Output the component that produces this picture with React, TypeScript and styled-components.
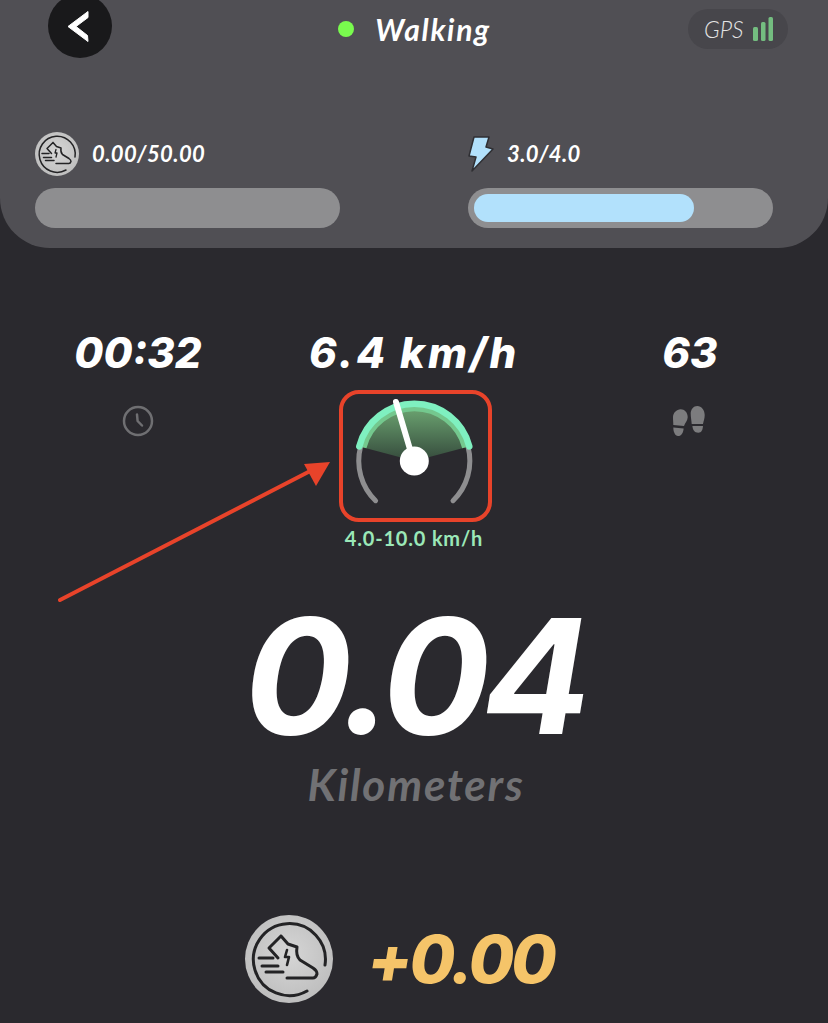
import styled, { createGlobalStyle } from 'styled-components';

const GlobalStyle = createGlobalStyle`
    html, body {
        margin: 0;
        padding: 0;
        background-color: #2a292e;
    }
`;

const Page = styled.div`
    position: relative;
    width: 828px;
    height: 1023px;
    overflow: hidden;
    background-color: #2a292e;
    color: #fff;
    font-family: 'Lato', 'Noto Sans', sans-serif;
`;

const Header = styled.header`
    box-sizing: border-box;
    height: 248px;
    padding: 0 55px 0 35px;
    background-color: #504f54;
    border-radius: 0 0 50px 50px;
`;

const TopBar = styled.div`
    display: grid;
    grid-template-columns: 1fr auto 1fr;
    align-items: center;
    height: 58px;
    margin-right: -20px;
    padding: 0 5px 0 13px;
`;

const BackButton = styled.div`
    display: flex;
    align-items: center;
    justify-content: center;
    width: 64px;
    height: 64px;
    margin-top: -6px;
    padding-right: 5px;
    box-sizing: border-box;
    border-radius: 50%;
    background-color: #19191b;
`;

const Activity = styled.div`
    display: flex;
    align-items: center;
    gap: 21px;
    margin-right: 7px;
    font-size: 30px;
    font-weight: 700;
    font-style: italic;
    letter-spacing: 1.7px;
`;

const Dot = styled.span`
    width: 16px;
    height: 16px;
    border-radius: 50%;
    background-color: #79fb4e;
`;

const GpsPill = styled.div`
    justify-self: end;
    display: flex;
    align-items: center;
    gap: 9px;
    box-sizing: border-box;
    width: 100px;
    height: 40px;
    padding-left: 16px;
    border-radius: 20px;
    background-color: #47464b;
    color: #e4e4e4;
    font-size: 23px;
    font-weight: 300;
    font-style: italic;
`;

const Meters = styled.div`
    display: grid;
    grid-template-columns: 305px 305px;
    justify-content: space-between;
    margin-top: 74px;
`;

const Meter = styled.div`
    display: flex;
    flex-direction: column;
    gap: 12px;
`;

const MeterLabel = styled.div`
    display: flex;
    align-items: center;
    gap: 13px;
    height: 44px;
    font-size: 22px;
    line-height: 42px;
    font-weight: 700;
    font-style: italic;
    letter-spacing: 0.4px;
`;

const Track = styled.div`
    box-sizing: border-box;
    height: 40px;
    padding: 6px;
    border-radius: 20px;
    background-color: #8e8e90;
`;

const Fill = styled.div`
    height: 100%;
    border-radius: 14px;
    background-color: #b2e1fc;
`;

const Stats = styled.section`
    display: grid;
    grid-template-columns: repeat(3, 1fr);
    align-items: start;
    margin-top: 78px;
`;

const Stat = styled.div`
    display: flex;
    flex-direction: column;
    align-items: center;
`;

const StatValue = styled.div<{ $spacing?: number }>`
    height: 54px;
    font-family: 'Inter', 'Lato', sans-serif;
    font-size: 42px;
    line-height: 54px;
    font-weight: 800;
    font-style: italic;
    white-space: nowrap;
    letter-spacing: ${(props) => props.$spacing ?? 0}px;
`;

const StatIcon = styled.div`
    display: flex;
    align-items: center;
    justify-content: center;
    height: 34px;
    margin-top: 24px;
`;

const GaugeFrame = styled.div`
    box-sizing: border-box;
    width: 153px;
    height: 132px;
    margin-top: 10px;
    margin-left: 2px;
    border: 4px solid #e8432a;
    border-radius: 20px;
`;

const RangeText = styled.div`
    margin-top: 4px;
    color: #9be8b8;
    font-size: 20px;
    line-height: 24px;
    font-weight: 700;
    letter-spacing: 0.8px;
`;

const Distance = styled.section`
    display: flex;
    flex-direction: column;
    align-items: center;
    margin-top: 48px;
`;

const DistanceValue = styled.div`
    height: 156px;
    font-family: 'Inter', 'Lato', sans-serif;
    font-size: 160px;
    line-height: 156px;
    font-weight: 700;
    font-style: italic;
    letter-spacing: -7px;
`;

const DistanceUnit = styled.div`
    margin-top: 3px;
    padding-left: 4px;
    color: #717174;
    font-size: 44px;
    line-height: 54px;
    font-weight: 700;
    font-style: italic;
    letter-spacing: 1.8px;
`;

const Reward = styled.section`
    display: flex;
    align-items: center;
    justify-content: center;
    gap: 34px;
    margin-top: 104px;
    padding-right: 29px;
`;

const RewardValue = styled.div`
    color: #f5c469;
    font-family: 'Inter', 'Lato', sans-serif;
    font-size: 66px;
    line-height: 88px;
    font-weight: 800;
    font-style: italic;
    letter-spacing: -3px;
`;

const Arrow = styled.svg`
    position: absolute;
    left: 50px;
    top: 450px;
`;

const Coin = ({ size }: { size: number }) => (
    <svg width={size} height={size} viewBox="0 0 88 88">
        <defs>
            <radialGradient id={`coin${size}`} cx="50%" cy="45%" r="60%">
                <stop offset="0%" stopColor="#d6d6d6" />
                <stop offset="100%" stopColor="#bcbcbc" />
            </radialGradient>
        </defs>
        <circle cx="44" cy="44" r="44" fill={`url(#coin${size})`} />
        <g fill="none" stroke="#232325" strokeWidth="3" strokeLinecap="round" strokeLinejoin="round">
            <path d="M62 76A36 36 0 1 1 80 50" />
            <path d="M36 21L24 33L33 43M36 21L43 29L52 32C51 38 52 42 55 45L68 53C71 55 72 57 72 59C71 62 70 63 68 63H42" />
            <path d="M14 43H28M17 51H33M21 57H38" />
            <path d="M42 35L40 42H44L42 50" strokeWidth="2.6" />
        </g>
    </svg>
);

const App = () => {
    return (
        <Page>
            <GlobalStyle />
            <Header>
                <TopBar>
                    <BackButton>
                        <svg width="22" height="31" viewBox="0 0 22 31">
                            <path d="M21 0.5L1 15.5L21 30.5L20.5 24.5L9 15.5L21 6.5Z" fill="#fff" stroke="#fff" strokeWidth="1" strokeLinejoin="round" />
                        </svg>
                    </BackButton>
                    <Activity>
                        <Dot />
                        Walking
                    </Activity>
                    <GpsPill>
                        GPS
                        <svg width="20" height="24" viewBox="0 0 20 24">
                            <rect x="0" y="10" width="5" height="14" rx="1.5" fill="#74bd80" />
                            <rect x="8" y="5" width="4.5" height="19" rx="1.5" fill="#74bd80" />
                            <rect x="15.5" y="0" width="4.5" height="24" rx="1.5" fill="#74bd80" />
                        </svg>
                    </GpsPill>
                </TopBar>
                <Meters>
                    <Meter>
                        <MeterLabel>
                            <Coin size={44} />
                            0.00/50.00
                        </MeterLabel>
                        <Track />
                    </Meter>
                    <Meter>
                        <MeterLabel>
                            <svg width="26" height="36" viewBox="0 0 26 36">
                                <path d="M6 1H21L18 11L25 13L4 35L8 21L1 20Z" fill="#b2e1fc" stroke="#2f2f33" strokeWidth="1.5" strokeLinejoin="round" />
                            </svg>
                            3.0/4.0
                        </MeterLabel>
                        <Track>
                            <Fill style={{ width: `${(220 / 293) * 100}%` }} />
                        </Track>
                    </Meter>
                </Meters>
            </Header>
            <Stats>
                <Stat>
                    <StatValue>00:32</StatValue>
                    <StatIcon>
                        <svg width="32" height="32" viewBox="0 0 32 32" fill="none" stroke="#6f6f72" strokeWidth="2.5" strokeLinecap="round" strokeLinejoin="round">
                            <circle cx="16" cy="16" r="14" />
                            <path d="M15 9.5L15.6 16L20 20.5" />
                        </svg>
                    </StatIcon>
                </Stat>
                <Stat>
                    <StatValue $spacing={2.9}>6.4 km/h</StatValue>
                    <GaugeFrame>
                        <svg width="145" height="124" viewBox="0 0 145 124">
                            <defs>
                                <linearGradient id="sector" x1="0" y1="0" x2="0" y2="1">
                                    <stop offset="0%" stopColor="#6ea873" />
                                    <stop offset="100%" stopColor="#354a3c" />
                                </linearGradient>
                            </defs>
                            <path d="M17.6 52.7L71.3 67L125 52.7A55.5 55.5 0 0 0 17.6 52.7Z" fill="url(#sector)" />
                            <path d="M17.6 52.7A55.5 55.5 0 0 0 32.6 106.7" fill="none" stroke="#8e8e90" strokeWidth="5" strokeLinecap="round" />
                            <path d="M125 52.7A55.5 55.5 0 0 1 110 106.7" fill="none" stroke="#8e8e90" strokeWidth="5" strokeLinecap="round" />
                            <path d="M21 53.6A52 52 0 0 1 121.6 53.6" fill="none" stroke="#74c88e" strokeWidth="5" />
                            <path d="M16.3 52.4A56.8 56.8 0 0 1 126.3 52.4" fill="none" stroke="#7ff0c0" strokeWidth="6.5" strokeLinecap="round" />
                            <path d="M53 8L69 62" stroke="#fff" strokeWidth="6" strokeLinecap="round" />
                            <circle cx="71.3" cy="67" r="14.5" fill="#fff" />
                        </svg>
                    </GaugeFrame>
                    <RangeText>4.0-10.0 km/h</RangeText>
                </Stat>
                <Stat>
                    <StatValue>63</StatValue>
                    <StatIcon>
                        <svg width="34" height="30" viewBox="0 0 34 30" fill="#7c7c7e">
                            <path d="M7.7 3.3C11.5 3.3 14.7 6.5 14.7 11.3C14.7 14.5 12 17 11 20L0.3 19C0.3 16 0 14 0 11.3C0 7 3.5 3.3 7.7 3.3Z" />
                            <path d="M0.3 21.6L10.6 22.4C10.3 26.5 8.5 30 5 30C2 30 0.3 26 0.3 21.6Z" />
                            <path d="M24.3 0C28.5 0 31.7 4 31.7 9C31.7 12.5 30.6 15 30 18H18.7C18.5 14.5 17.7 11.5 17.7 7.5C17.7 3.5 20.5 0 24.3 0Z" />
                            <path d="M19.4 20H30C29.6 24 28.5 26.7 25.3 26.7C21.5 26.7 19.8 24 19.4 20Z" />
                        </svg>
                    </StatIcon>
                </Stat>
            </Stats>
            <Distance>
                <DistanceValue>0.04</DistanceValue>
                <DistanceUnit>Kilometers</DistanceUnit>
            </Distance>
            <Reward>
                <Coin size={88} />
                <RewardValue>+0.00</RewardValue>
            </Reward>
            <Arrow width="290" height="160" viewBox="0 0 290 160">
                <path d="M10 150L268 17" stroke="#e8432a" strokeWidth="4" strokeLinecap="round" />
                <path d="M280 12L254 14L266 36Z" fill="#e8432a" />
            </Arrow>
        </Page>
    );
};

export default App;
